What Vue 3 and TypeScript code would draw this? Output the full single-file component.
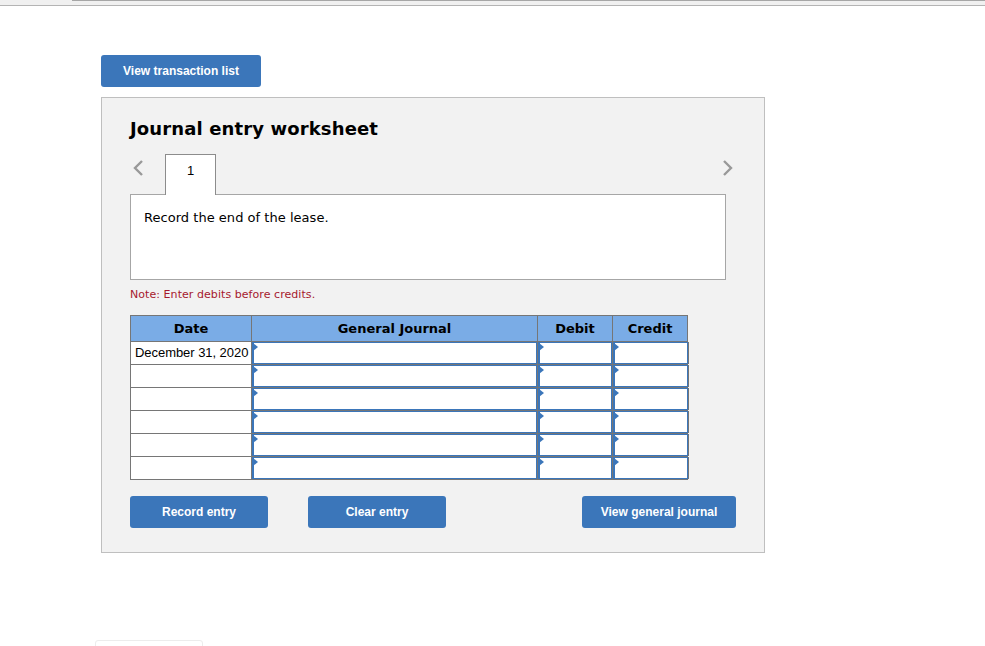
<script setup lang="ts">
const rows = ['December 31, 2020', '', '', '', '', '']
</script>

<template>
    <div class="page">
        <div class="top-bar"></div>

        <button class="btn list-btn">View transaction list</button>

        <section class="worksheet">
            <h2>Journal entry worksheet</h2>

            <div class="tabs">
                <svg class="arrow" width="12" height="16" viewBox="0 0 12 16">
                    <path d="M10 1 3 8l7 7" />
                </svg>
                <div class="tab">1</div>
                <svg class="arrow next" width="12" height="16" viewBox="0 0 12 16">
                    <path d="M2 1l7 7-7 7" />
                </svg>
            </div>

            <div class="prompt">Record the end of the lease.</div>

            <p class="note">Note: Enter debits before credits.</p>

            <table class="journal">
                <thead>
                    <tr>
                        <th class="c-date">Date</th>
                        <th class="c-account">General Journal</th>
                        <th class="c-debit">Debit</th>
                        <th class="c-credit">Credit</th>
                    </tr>
                </thead>
                <tbody>
                    <tr v-for="(date, i) in rows" :key="i">
                        <td class="date">{{ date }}</td>
                        <td class="cell"><div class="field"></div></td>
                        <td class="cell"><div class="field"></div></td>
                        <td class="cell"><div class="field"></div></td>
                    </tr>
                </tbody>
            </table>

            <div class="actions">
                <button class="btn">Record entry</button>
                <button class="btn clear">Clear entry</button>
                <button class="btn view">View general journal</button>
            </div>
        </section>

        <div class="stub"></div>
    </div>
</template>

<style>
html, body {
    background: #fff;
    overflow: hidden;
}
</style>

<style scoped>
.page {
    position: relative;
    height: 646px;
    overflow: hidden;
    padding-top: 55px;
    box-sizing: border-box;
    font-family: "DejaVu Sans", sans-serif;
    color: #000;
}

.top-bar {
    position: absolute;
    top: 0;
    left: 0;
    right: 0;
    height: 5px;
    background: #f0f0f0;
    border-bottom: 1px solid #b4b4b4;
}

.top-bar::before {
    content: "";
    position: absolute;
    top: 0;
    left: 72px;
    right: 0;
    height: 1px;
    background: #a6a6a6;
}

.btn {
    display: block;
    width: 138px;
    height: 32px;
    padding: 0;
    border: 0;
    border-radius: 3px;
    background: #3b76ba;
    color: #fff;
    font-family: "Liberation Sans", sans-serif;
    font-size: 12px;
    font-weight: 700;
}

.list-btn {
    width: 160px;
    margin-left: 101px;
}

.worksheet {
    width: 664px;
    height: 456px;
    box-sizing: border-box;
    margin: 10px 0 0 101px;
    padding: 20px 28px 0;
    background: #f2f2f2;
    border: 1px solid #bfbfbf;
}

h2 {
    margin: 0;
    font-size: 18px;
    line-height: 22px;
    font-weight: 700;
    letter-spacing: 0.13px;
}

.tabs {
    display: flex;
    align-items: center;
    justify-content: space-between;
    width: 596px;
    height: 40px;
    margin-top: 14px;
}

.arrow {
    fill: none;
    stroke: #999;
    stroke-width: 2.4;
    margin: -12px 0 0 2px;
}

.arrow.next {
    margin: -12px -8px 0 0;
}

.tab {
    width: 51px;
    height: 41px;
    box-sizing: border-box;
    margin: 0 auto 0 21px;
    align-self: flex-start;
    padding-top: 8px;
    background: #fff;
    border: 1px solid #8c8c8c;
    border-bottom: 0;
    text-align: center;
    font-family: "Liberation Sans", sans-serif;
    font-size: 13px;
    line-height: 16px;
    position: relative;
    z-index: 1;
}

.prompt {
    width: 596px;
    height: 86px;
    box-sizing: border-box;
    padding: 15px 13px;
    background: #fff;
    border: 1px solid #a6a6a6;
    font-size: 13px;
    line-height: 16px;
    letter-spacing: 0.03px;
}

.note {
    margin: 8px 0 0;
    color: #a6192e;
    font-size: 11px;
    line-height: 14px;
    letter-spacing: 0.06px;
}

.journal {
    margin-top: 13px;
    border-collapse: collapse;
    table-layout: fixed;
    width: 558px;
}

th {
    height: 25px;
    padding: 0;
    background: #7aace6;
    border: 1px solid #767676;
    font-size: 13px;
    font-weight: 700;
}

.c-date { width: 120px; }
.c-account { width: 285px; }
.c-debit { width: 74px; }
.c-credit { width: 74px; }

td {
    height: 22px;
    padding: 0;
    background: #fff;
    border: 1px solid #767676;
}

td.date {
    height: 20px;
    padding: 0 0 2px 4px;
    font-family: "Liberation Sans", sans-serif;
    font-size: 13px;
    letter-spacing: -0.05px;
    white-space: nowrap;
}

.field {
    position: relative;
    height: 22px;
    box-sizing: border-box;
    border: 1px solid #3b76ba;
    border-left-width: 2px;
    background: #fff;
}

.cell:last-child .field {
    margin-right: -1px;
    box-shadow: 1px 0 0 #767676;
}

.field::before {
    content: "";
    position: absolute;
    top: 0;
    left: -1px;
    border-left: 5px solid #3b76ba;
    border-top: 4px solid transparent;
    border-bottom: 4px solid transparent;
}

.actions {
    display: flex;
    gap: 40px;
    width: 606px;
    margin-top: 16px;
}

.view {
    width: 154px;
    margin-left: auto;
}

.stub {
    position: absolute;
    left: 95px;
    top: 640px;
    width: 108px;
    height: 20px;
    box-sizing: border-box;
    border: 1px solid #ececec;
    border-radius: 3px;
}
</style>
